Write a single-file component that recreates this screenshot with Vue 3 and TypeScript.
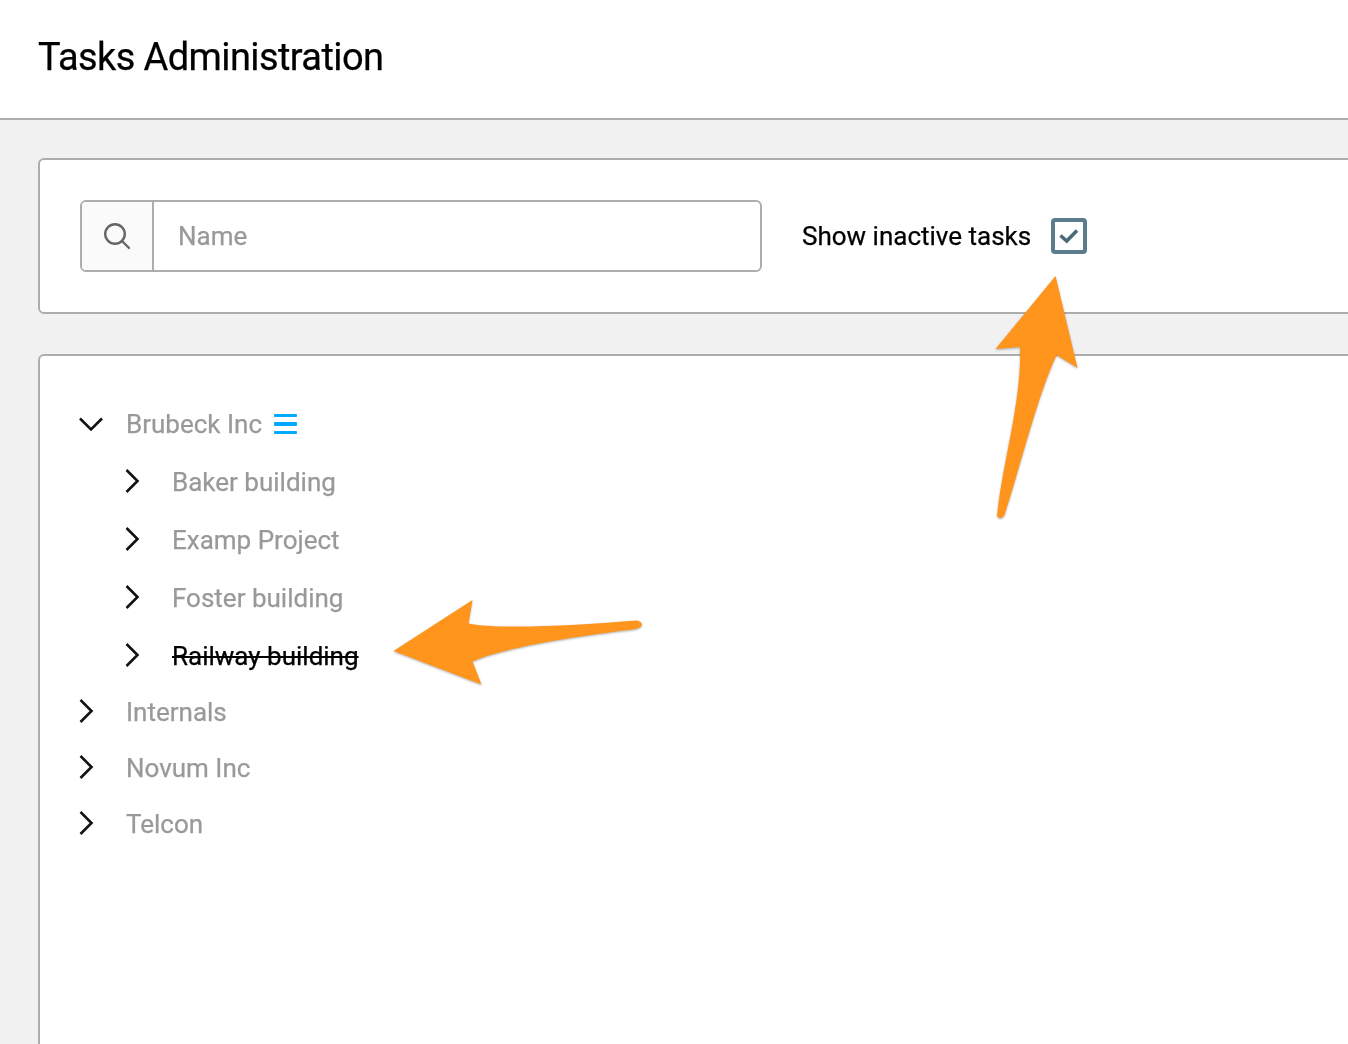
<script setup lang="ts">
interface Row { name: string; level: number; open?: boolean; inactive?: boolean; menu?: boolean }
const rows: Row[] = [
  { name: 'Brubeck Inc', level: 0, open: true, menu: true },
  { name: 'Baker building', level: 1 },
  { name: 'Examp Project', level: 1 },
  { name: 'Foster building', level: 1 },
  { name: 'Railway building', level: 1, inactive: true },
  { name: 'Internals', level: 0 },
  { name: 'Novum Inc', level: 0 },
  { name: 'Telcon', level: 0 },
]
</script>

<template>
  <div class="page">
    <header class="header"><h1>Tasks Administration</h1></header>
    <main class="content">
      <section class="panel filters">
        <div class="search">
          <span class="addon">
            <svg width="28" height="28" viewBox="0 0 28 28" fill="none" stroke="#666" stroke-width="2.4">
              <circle cx="12" cy="12" r="9.8" />
              <path d="M19 19 L26 26" stroke-linecap="round" />
            </svg>
          </span>
          <span class="placeholder">Name</span>
        </div>
        <span class="toggle-label">Show inactive tasks</span>
        <span class="checkbox">
          <svg width="20" height="16" viewBox="0 0 20 16" fill="none" stroke="#4c6a78" stroke-width="3.6">
            <path d="M1.5 7.5 L7.7 13 L18 2.5" />
          </svg>
        </span>
      </section>
      <section class="panel tree">
        <div v-for="row in rows" :key="row.name" class="row" :class="['level' + row.level, { open: row.open }]">
          <span class="caret">
            <svg v-if="row.open" width="26" height="16" viewBox="0 0 26 16" fill="none" stroke="#111" stroke-width="2.6">
              <path d="M2 2.5 L13 13.5 L24 2.5" />
            </svg>
            <svg v-else width="16" height="26" viewBox="0 0 16 26" fill="none" stroke="#111" stroke-width="2.6">
              <path d="M2.5 2 L13.5 13 L2.5 24" />
            </svg>
          </span>
          <span class="name" :class="{ inactive: row.inactive }">{{ row.name }}</span>
          <span v-if="row.menu" class="menu"><i></i><i></i><i></i></span>
        </div>
      </section>
    </main>
    <svg class="arrows" width="1348" height="1044" viewBox="0 0 1348 1044">
      <path class="arrow" d="M1055.5 276 L1077.5 368 L1056.5 355 C1038 395 1022 460 1004.5 515 Q1001 521 997 516 C1003 460 1022 400 1020 347 L995.5 349 Z" />
      <path class="arrow" d="M393.5 651 L472.5 600 L468.5 623.5 C500 630 580 625 637 620.5 Q643 622 641.5 626 Q640 628 636 629 C590 635 510 645 472.5 661.5 L481.5 684.5 Z" />
    </svg>
  </div>
</template>

<style>
html, body { margin: 0; background: #f1f1f1; overflow: hidden; }
</style>

<style scoped>
.page {
  position: relative;
  width: 1348px;
  height: 1044px;
  overflow: hidden;
  background: #f1f1f1;
  font-family: Roboto, "Liberation Sans", sans-serif;
  -webkit-text-stroke: 0.25px currentColor;
}
.header {
  height: 118px;
  background: #fff;
  border-bottom: 2px solid #adadad;
  display: flex;
  align-items: center;
  padding-left: 38px;
}
h1 {
  margin: 0 0 5px;
  font-size: 38px;
  letter-spacing: -0.6px;
  font-weight: 400;
  color: #000;
  will-change: transform;
}
.content {
  display: flex;
  flex-direction: column;
  gap: 40px;
  padding: 38px 0 0 38px;
  width: 1340px;
}
.panel {
  background: #fff;
  border: 2px solid #adadad;
  border-radius: 6px;
  box-sizing: border-box;
}
.filters {
  height: 156px;
  display: flex;
  align-items: center;
  padding: 0 40px;
}
.search {
  width: 682px;
  height: 72px;
  box-sizing: border-box;
  border: 2px solid #adadad;
  border-radius: 6px;
  display: flex;
  align-items: stretch;
  margin-right: 40px;
}
.addon {
  width: 70px;
  background: #fafafa;
  border-right: 2px solid #adadad;
  border-radius: 4px 0 0 4px;
  display: flex;
  align-items: center;
  justify-content: center;
}
.placeholder {
  align-self: center;
  padding-left: 24px;
  font-size: 26px;
  color: #999;
  will-change: transform;
}
.toggle-label {
  font-size: 26px;
  color: #000;
  margin-right: 20px;
  will-change: transform;
}
.checkbox {
  width: 36px;
  height: 36px;
  box-sizing: border-box;
  border: 4px solid #5a7c8c;
  border-radius: 4px;
  display: flex;
  align-items: center;
  justify-content: center;
}
.tree {
  height: 800px;
  padding-top: 39px;
}
.row {
  display: flex;
  align-items: center;
  box-sizing: border-box;
}
.level0 {
  height: 56px;
  padding: 0 0 2px 38px;
}
.level0.open {
  height: 58px;
  padding-bottom: 0;
}
.level1 {
  height: 58px;
  padding-left: 84px;
}
.caret {
  width: 48px;
  display: flex;
  align-items: center;
  margin-bottom: 2px;
}
.level0.open .caret { margin-bottom: 0; }
.caret svg { flex: none; }
.name {
  font-size: 26px;
  color: #999;
  will-change: transform;
}
.name.inactive {
  color: #000;
  text-decoration: line-through;
}
.menu {
  display: flex;
  flex-direction: column;
  gap: 5px;
  margin-left: 12px;
}
.menu i {
  display: block;
  width: 23px;
  height: 3.5px;
  border-radius: 1px;
  background: #00a8ff;
}
.arrows {
  position: absolute;
  left: 0;
  top: 0;
  pointer-events: none;
}
.arrow {
  fill: #ff951c;
  filter: drop-shadow(0 1px 1px rgba(0, 0, 0, 0.3));
}
</style>
